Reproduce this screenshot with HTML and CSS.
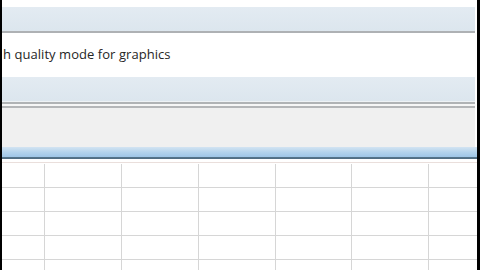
FILE: index.html
```html
<!DOCTYPE html>
<html lang="en">
<head>
    <meta charset="UTF-8">
    <title>Options</title>
    <link rel="stylesheet" href="styles.css">
</head>
<body>
<div class="window">
    <div class="gap-top"></div>
    <div class="band"></div>
    <div class="rule"></div>
    <div class="option">
        <span class="label">h quality mode for graphics</span>
    </div>
    <div class="band"></div>
    <div class="rule double"></div>
    <div class="ribbon"></div>
    <div class="ribbon-edge"></div>
    <div class="sheet">
        <div class="head-row"></div>
        <div class="grid">
            <div class="cell"></div><div class="cell"></div><div class="cell"></div><div class="cell"></div><div class="cell"></div><div class="cell"></div><div class="cell"></div>
            <div class="cell"></div><div class="cell"></div><div class="cell"></div><div class="cell"></div><div class="cell"></div><div class="cell"></div><div class="cell"></div>
            <div class="cell"></div><div class="cell"></div><div class="cell"></div><div class="cell"></div><div class="cell"></div><div class="cell"></div><div class="cell"></div>
            <div class="cell"></div><div class="cell"></div><div class="cell"></div><div class="cell"></div><div class="cell"></div><div class="cell"></div><div class="cell"></div>
            <div class="cell"></div><div class="cell"></div><div class="cell"></div><div class="cell"></div><div class="cell"></div><div class="cell"></div><div class="cell"></div>
        </div>
    </div>
</div>
</body>
</html>
```

FILE: styles.css
```css
*{
    margin: 0px;
    padding: 0px;
    box-sizing: border-box;
}
html, body{
    width: 100%;
    height: 100%;
    overflow: hidden;
}
body{
    background-color: #000;
    font-family: "Open Sans", "DejaVu Sans", sans-serif;
}
.window{
    height: 270px;
    margin: 0 3px 0 2px;
    background-color: #fff;
    display: flex;
    flex-direction: column;
    overflow: hidden;
}
.gap-top{
    height: 7px;
    flex-shrink: 0;
}
.band{
    height: 24px;
    flex-shrink: 0;
    margin-right: 2px;
    background: linear-gradient(#e3ebf2, #dce6ee);
}
.rule{
    height: 2px;
    flex-shrink: 0;
    margin-right: 2px;
    background-color: #aeb1b4;
}
.rule.double{
    height: 7px;
    background: linear-gradient(#eef2f5 0, #eef2f5 1px, #b0b3b5 1px, #b0b3b5 3px, #f6f6f6 3px, #f6f6f6 5px, #b4b6b8 5px, #b4b6b8 7px);
}
.option{
    height: 44px;
    flex-shrink: 0;
    display: flex;
    align-items: center;
    padding-left: 1px;
    padding-bottom: 2px;
}
.label{
    font-size: 13px;
    color: #262626;
    letter-spacing: 0.05px;
}
.ribbon{
    height: 39px;
    flex-shrink: 0;
    margin-right: 2px;
    background-color: #f0f0f0;
}
.ribbon-edge{
    height: 12px;
    flex-shrink: 0;
    background: linear-gradient(#d3e4f2 0, #b4d3ec 5px, #9ec5e6 10px, #56768c 10px, #4f6b80 12px);
}
.sheet{
    flex: 1;
    background-color: #fff;
    padding-top: 3px;
}
.head-row{
    height: 1px;
    margin-bottom: 1px;
    background-color: #eadfdc;
}
.grid{
    display: grid;
    grid-template-columns: 43px 77px 77px 77px 76px 77px 77px;
    grid-auto-rows: 24px;
}
.cell{
    border-right: 1px solid #d6d6d6;
    border-bottom: 1px solid #d6d6d6;
}
```
